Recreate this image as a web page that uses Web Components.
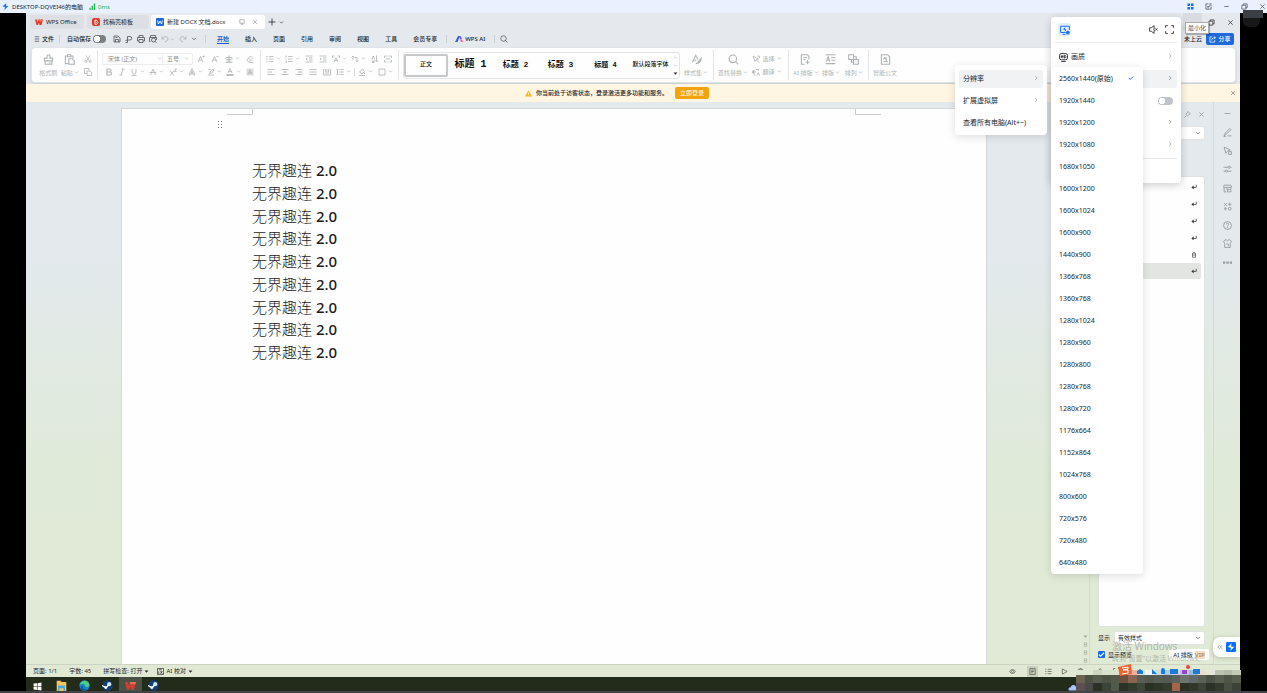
<!DOCTYPE html>
<html lang="zh-CN">
<head>
<meta charset="utf-8">
<title>DESKTOP-DQVEI46的电脑</title>
<style>
html,body{margin:0;height:100%}
body{font-family:"Noto Sans","Noto Sans CJK SC",sans-serif;font-size:6px;line-height:8px;color:#22262b;background:#000;overflow:hidden}
</style>
</head>
<body>
<remote-app></remote-app>
<script>
const BASE = `
*{box-sizing:border-box}
button,input,select{font:inherit;color:inherit;margin:0;padding:0;border:0;background:none;outline:0}
button{display:inline-flex;align-items:center;white-space:nowrap}
ui-icon{flex:none}
.sp{flex:1}`;
function define(name, css, html) {
  const t = document.createElement('template');
  t.innerHTML = `<style>${BASE}${css}</style>${html}`;
  customElements.define(name, class extends HTMLElement {
    constructor() { super(); this.attachShadow({mode: 'open'}).append(t.content.cloneNode(true)); }
  });
}

/* 16-unit stroke icons */
const I = {
  caret: '<path d="M3 5l5 5 5-5" stroke-width="2"/>',
  drop: '<path d="M2 5h12l-6 7z" fill="currentColor" stroke="none"/>',
  right: '<path d="M6 3l5 5-5 5"/>',
  close: '<path d="M3 3l10 10M13 3L3 13"/>',
  min: '<path d="M3 8h10"/>',
  restore: '<path d="M2 5h9v9H2zM5 5V2h9v9h-3"/>',
  plus: '<path d="M8 1v14M1 8h14"/>',
  burger: '<path d="M2 2h12M2 8h12M2 14h12"/>',
  monitor: '<path d="M2 2h12v9H2zM5 14h6M8 11v3"/>',
  save: '<path d="M2 14V2h8l4 4v8zM5 14V9h6v5M5 5h4"/>',
  export: '<path d="M5 15V3h5a3.500 3.500 0 0 1 0 7H5M1 15h4M1 11l4-1"/>',
  print: '<path d="M4 5V1h8v4M4 12H1V5h14v7h-3M4 9h8v6H4z"/>',
  preview: '<path d="M3 5V1h10v4M3 13H1V5h14v5"/><circle cx="9" cy="10" r="4"/><path d="M12 13l3 2"/>',
  undo: '<path d="M2 3v5h5M2 8c3-6 12-6 12 0 0 3-3 5-6 6"/>',
  redo: '<path d="M14 3v5H9M14 8C11 2 2 2 2 8c0 3 3 5 6 6"/>',
  search: '<circle cx="7" cy="7" r="5.500"/><path d="M11 11l4 4"/>',
  brush: '<path d="M6 6V3a2 2 0 0 1 4 0v3h4v4H2V6zM3 10v5h10v-5M10 15v-3"/>',
  paste: '<path d="M5 3H2v11h4M5 1h5v3H5zM10 3h3v3M7 7h5l3 3v5H7z"/>',
  cut: '<path d="M4 1l6 9M12 1L6 10"/><circle cx="4" cy="12.500" r="2.200"/><circle cx="12" cy="12.500" r="2.200"/>',
  copy: '<path d="M5 11H1V1h9v4M6 6h6l3 3v6H6z"/>',
  bold: '<path d="M4 2h5a3 3 0 0 1 0 6H4zM4 8h6a3 3 0 0 1 0 6H4z" stroke-width="2.200"/>',
  italic: '<path d="M7 2h6M3 14h6M10 2L6 14"/>',
  underline: '<path d="M4 2v6a4 4 0 0 0 8 0V2M3 15h10"/>',
  strike: '<path d="M3 14L8 2l5 12M1 9h14"/>',
  sup: '<path d="M2 5l8 10M10 5L2 15M11 2h4l-4 5h4"/>',
  textA: '<path d="M2 14L8 1l6 13h-3L8 6l-3 8zM6 11h4"/>',
  hilite: '<path d="M2 14h12M5 11l2-5 6-4 1 2-4 6-5 1M3 3h4"/>',
  colorA: '<path d="M4 10l4-9 4 9M5 7h6"/><path d="M1 14h14" stroke-width="3.500"/>',
  boxA: '<path d="M1 1h14v14H1z" fill="#dcdedf" stroke="none"/><path d="M4 13l4-10 4 10M5 10h6"/>',
  growA: '<path d="M2 14L7 3l5 11M4 10h6M11 3h4M13 1v4"/>',
  shrinkA: '<path d="M2 14L7 3l5 11M4 10h6M11 3h4"/>',
  phon: '<path d="M8 1v4M2 9V5h12v4M4 9h8M8 5v10M3 12h10M1 15h14"/>',
  eraser: '<path d="M2 9l7-7 5 5-7 7H5zM5 6l5 5M7 15h8"/>',
  bullets: '<path d="M6 3h9M6 8h9M6 13h9"/><path d="M1 3h2M1 8h2M1 13h2" stroke-width="2.500"/>',
  numbers: '<path d="M6 3h9M6 8h9M6 13h9M2 1v4M1 8h2M1 12h2v3H1"/>',
  outdent: '<path d="M1 2h14M8 6h7M8 10h7M1 14h14M5 6L2 8l3 2"/>',
  indent: '<path d="M1 2h14M8 6h7M8 10h7M1 14h14M2 6l3 2-3 2"/>',
  widthA: '<path d="M4 14L8 5l4 9M5 11h6M1 2h4M1 2v4M11 2h4v4"/>',
  dir: '<path d="M4 2v8M1 5l3-3 3 3M12 6v8M9 11l3 3 3-3M8 5h5"/>',
  sort: '<path d="M2 9l2.500-7L7 9M2 12h5l-5 3h5M11 1v12M9 11l2 3 3-3"/>',
  ruler: '<path d="M1 6V2h4M15 6V2h-4M1 10v4h4M15 10v4h-4M3 8h10M7 2h2M7 14h2"/>',
  left: '<path d="M1 3h14M1 8h9M1 13h14"/>',
  center: '<path d="M1 3h14M4 8h8M1 13h14"/>',
  rightal: '<path d="M1 3h14M6 8h9M1 13h14"/>',
  justify: '<path d="M1 3h14M1 8h14M1 13h14"/>',
  dist: '<path d="M1 2v12h14V2M5 2v6M11 2v6M4 10h8M8 2v6"/>',
  spacing: '<path d="M7 3h8M7 8h8M7 13h8M3 2v12M1 4l2-2 2 2M1 12l2 2 2-2"/>',
  fill: '<path d="M3 8l6-6 4 5-5 5zM2 15h12M13 9v3"/>',
  border: '<path d="M2 2h12v12H2zM5 14v1M8 14v1"/>',
  styles: '<path d="M2 12L7 2l3 6M4 9h4M7 14c4 0 3-3 8-8-1 6-3 8-8 8z"/>',
  pick: '<path d="M2 2l4 11 2-4 5-1zM9 10l5 5M11 2h4v4"/>',
  trans: '<path d="M1 6h5v4H1zM3 4v8M8 3h5v3M3 14h4M10 15l2.500-6 2.500 6"/>',
  aidoc: '<path d="M7 15H2V1h9l2 3v4M5 5h5M5 8h3M11 9v6M8 12h6"/>',
  layout: '<path d="M1 1h14M1 14h14M2 11l2.500-7L7 11M3 9h3M9 5h6M9 9h6"/>',
  arrange: '<path d="M1 1h7v7H1zM8 4h4v4M5 8v4h3M8 8h7v7H8z"/>',
  gov: '<path d="M2 1h9l3 3v11H2zM5 11h6M5 8l2-3 2 3M9 5v6"/>',
  pin: '<path d="M9 1l6 6-3 1-4 4-4-5 4-3zM5 11l-4 4"/>',
  pen: '<path d="M2 14l2-5 8-8 2 2-8 8zM8 14h7M1 15h4"/>',
  cursor: '<path d="M2 2l3 11 3-4 5-2zM10 10h5v5h-5z"/>',
  sliders: '<path d="M1 4h8M13 4h2M1 11h3M8 11h7"/><circle cx="11" cy="4" r="2"/><circle cx="6" cy="11" r="2"/>',
  store: '<path d="M2 2h12l1 4H1zM2 6v8h4M14 6v3M5 9h5M8 14h6v-4H8z"/>',
  grid4: '<path d="M2 2l5 5M7 2L2 7M9 4h6M12 1v6M2 12h5M4 9v6"/><circle cx="12" cy="12" r="2.500"/>',
  help: '<circle cx="8" cy="8" r="7"/><path d="M6 6c0-3 4-3 4 0 0 2-2 1-2 4M8 11v2"/>',
  shirt: '<path d="M5 1l3 2 3-2 4 3-2 4v7H3V8L1 4z"/><path d="M6 9h4v4"/>',
  dots: '<path d="M0 6h4v4H0zM6 6h4v4H6zM12 6h4v4h-4z" fill="currentColor" stroke="none"/>',
  eye: '<path d="M1 8c4-6 10-6 14 0-4 6-10 6-14 0z"/><circle cx="8" cy="8" r="2.500"/>',
  page: '<path d="M2 1h12v14H2zM5 5h6M5 8h6M5 11h3"/>',
  play: '<path d="M3 2l11 6-11 6z"/>',
  globe: '<circle cx="8" cy="8" r="6.500"/><path d="M1.500 8h13M8 1.500c-4 4-4 9 0 13 4-4 4-9 0-13"/>',
  full: '<path d="M1 5V1h4M11 1h4v4M15 11v4h-4M5 15H1v-4"/>',
  mute: '<path d="M1 5h3l5-4v14l-5-4H1zM11 6l4 4M15 6l-4 4"/>',
  hd: '<rect x="1" y="1" width="14" height="11" rx="3"/><path d="M4 15h8M4 4v5M7 4v5M4 6.500h3M9.500 4v5c4 0 4-5 0-5"/>',
  check: '<path d="M2 8l4 4 8-8" stroke-width="2.500"/>',
  enter: '<path d="M14 2v7H3" stroke-width="2"/><path d="M7 4L1 9l6 5z" fill="currentColor" stroke="none"/>',
  note: '<path d="M8 2H2v12h12V8M5 8h6M5 11h4M10 2h5M10 5h5"/>',
  share: '<path d="M7 2H2v12h11V9M6 10c0-5 3-6 8-6M11 1l4 3-4 3"/>',
  para: '<path d="M4 3h8v11H4zM4 8h8M6 1h4"/>',
  dbl: '<path d="M7 3L2 8l5 5M14 3L9 8l5 5"/>',
  /* filled and multi-colour marks */
  win4: '<path d="M1 1h6v6H1zM9 1h6v6H9zM1 9h6v6H1zM9 9h6v6H9z" fill="#1a6cf5" stroke="none"/>',
  bolt: '<path d="M10 0L1 8l6 1-2 7 10-9-6-1z" fill="#1978f2" stroke="none"/>',
  signal: '<path d="M1 11h3v5H1zM6 6h3v10H6zM11 1h3v15h-3z" fill="#18b84a" stroke="none"/>',
  wps: '<path d="M0 3h4l1 6 2-6h3l1 6 1-6h4l-3 11H9l-1-5-2 5H3z" fill="#e0392c" stroke="none"/><path d="M7 3h9l-1 3H8z" fill="#f16c51" stroke="none"/>',
  docer: '<rect width="16" height="16" rx="4" fill="#e4382f" stroke="none"/><path d="M6 13V4c6 0 6 4 3 5M6 13c5 0 6-3 6-5" stroke="#fff" stroke-width="2"/>',
  word: '<rect width="16" height="16" rx="2" fill="#1c67e3" stroke="none"/><path d="M3 5l2 7 3-6 3 6 2-7" stroke="#fff" stroke-width="1.800"/>',
  wpsai: '<path d="M0 14L6 2h4L5 14z" fill="#2f62f4" stroke="none"/><path d="M8 2h3l3 6h-4z" fill="#7a4df2" stroke="none"/><path d="M10 9h4l2 5h-4z" fill="#ee55c4" stroke="none"/>',
  warn: '<path d="M8 1l8 14H0z" fill="#f9b418" stroke="none"/><path d="M8 6v4M8 12v1" stroke="#fff" stroke-width="1.800"/>',
  cast: '<path d="M9 12H1V2h14v6M4 15h5M8 4L6 7h3l-1 3" stroke="#1a73f0"/><circle cx="12.500" cy="12" r="3" fill="#1a73f0" stroke="none"/>',
  start: '<path d="M1 2.500L7 2v5.500H1zM8 2l7-1v6.500H8zM1 8.500h6V14l-6-.5zM8 8.500h7V15l-7-1z" fill="#fff" stroke="none"/>',
  folder: '<path d="M1 1h6l1 2h7v13H1z" fill="#f4c64f" stroke="none"/><path d="M3 8h10v8h-2v-4H5v4H3z" fill="#4aa9dc" stroke="none"/>',
  edge: '<circle cx="8" cy="8" r="7.500" fill="#1687cf" stroke="none"/><path d="M1 7C3-1 14-1 15 7c0 4-5 4-6 2 1-3-5-4-8-2z" fill="#48cf80" stroke="none"/><path d="M6 8c-2 4 1 7 6 5-3 4-9 2-9-2 0-2 2-3 3-3z" fill="#0c4d96" stroke="none"/>',
  steam: '<circle cx="8" cy="8" r="7.500" fill="#123f78" stroke="none"/><circle cx="10.500" cy="6" r="3" fill="#cfe3f2" stroke="none"/><path d="M0 8l6 3 4-4" stroke="#fff" stroke-width="2"/><circle cx="5.500" cy="11" r="2" fill="#fff" stroke="none"/>',
  cloud: '<path d="M2 15c-3-4 1-7 3-6C6 3 14 2 16 8v7z" fill="#a5c6fb" stroke="none"/>',
  bluebolt: '<rect width="16" height="16" rx="2" fill="#0f6ef7" stroke="none"/><path d="M9 2L3 8l5 1-1 5 6-6-5-1z" fill="#fff" stroke="none"/>',
  aibox: '<path d="M1 1h14v14H1zM4 4h7M8 7l4 6M12 7l-4 6M4 8v5"/>'
};
customElements.define('ui-icon', class extends HTMLElement {
  constructor() { super(); this.attachShadow({mode: 'open'}); }
  connectedCallback() {
    this.shadowRoot.innerHTML = `<style>:host{display:inline-block;width:var(--s,8px);height:var(--s,8px)}svg{display:block;width:100%;height:100%}</style>
    <svg viewBox="0 0 16 16" fill="none" stroke="currentColor" stroke-width="1.600" aria-hidden="true">${I[this.getAttribute('name')] || ''}</svg>`;
  }
});

/* ribbon button: icon, optional caret, optional caption (stacked or inline) */
customElements.define('tool-btn', class extends HTMLElement {
  constructor() { super(); this.attachShadow({mode: 'open'}); }
  connectedCallback() {
    const c = this.hasAttribute('caret') ? '<ui-icon class="c" name="caret"></ui-icon>' : '';
    const icon = `<ui-icon name="${this.getAttribute('icon')}"></ui-icon>`;
    const label = this.getAttribute('label') || '';
    const big = this.hasAttribute('big');
    this.shadowRoot.innerHTML = `<style>${BASE}
    :host{display:flex;--s:8px}
    button{gap:2px;width:100%;justify-content:center}
    .c{--s:5px}
    .big{flex-direction:column;gap:4px;--s:11px}
    .big span{display:flex;align-items:center;gap:1px;line-height:8px}</style>
    <button class="${big ? 'big' : ''}" aria-label="${label || this.getAttribute('icon')}">${big ? `${icon}<span>${label}${c}</span>` : `${icon}${label}${c}`}</button>`;
  }
});

define('remote-titlebar', `
:host{display:flex;align-items:center;height:13px;padding:0 0 0 2px;background:#e9f1fe;--s:7px}
.n{margin:0 6px 0 3px}.ms{color:#1cb44c;margin-left:2px}
button{width:18px;justify-content:center;color:#444b55}
nav{display:flex;margin-right:-4px}`, `
<ui-icon name="bolt"></ui-icon><span class="n">DESKTOP-DQVEI46的电脑</span><ui-icon name="signal"></ui-icon><span class="ms">0ms</span><span class="sp"></span>
<nav><button aria-label="应用"><ui-icon name="win4"></ui-icon></button><button aria-label="便签"><ui-icon name="note"></ui-icon></button><button aria-label="最小化"><ui-icon name="min"></ui-icon></button><button aria-label="还原"><ui-icon name="restore"></ui-icon></button><button aria-label="关闭"><ui-icon name="close"></ui-icon></button></nav>`);

define('wps-tabs', `
:host{display:flex;align-items:center;height:18px;padding:0 0 0 4px;--s:8px}
.t{display:flex;align-items:center;gap:3px;height:14px;padding:0 5px;border-radius:3px;background:#dcdfe3;width:54px;margin-right:3px}
.t.b{width:62px;margin-right:2px}
.t.on{background:#fff;width:114px}
.t.on span{flex:1}
.t.on .g{color:#8a8f95;--s:6px}.t.on button+button{margin:0 2px 0 4px}
.add{--s:8px;margin:0 3px 0 0}.dn{--s:5px}
.w{width:19px;height:18px;justify-content:center;--s:7px}.w.h{background:#d9dce0}`, `
<button class="t"><ui-icon name="wps"></ui-icon>WPS Office</button>
<button class="t b"><ui-icon name="docer"></ui-icon>找稿壳模板</button>
<div class="t on"><ui-icon name="word"></ui-icon><span>新建 DOCX 文档.docx</span><button class="g" aria-label="窗口"><ui-icon name="monitor"></ui-icon></button><button class="g" aria-label="关闭标签"><ui-icon name="close"></ui-icon></button></div>
<button class="add" aria-label="新建"><ui-icon name="plus"></ui-icon></button><button class="dn" aria-label="标签列表"><ui-icon name="caret"></ui-icon></button>
<span class="sp"></span>
<button class="w h" aria-label="最小化"><ui-icon name="min"></ui-icon></button><button class="w" aria-label="还原"><ui-icon name="restore"></ui-icon></button><button class="w" aria-label="关闭"><ui-icon name="close"></ui-icon></button>`);

define('wps-menubar', `
:host{display:flex;align-items:center;height:16px;padding:0 6px 0 8px;--s:8px;font-weight:500}
.f{gap:2px;--s:6px}
i{width:1px;height:8px;background:#ccd1d6}
.f+i{margin-left:5px}
label{display:flex;align-items:center;gap:2px;margin-left:7px}
input{appearance:none;width:13px;height:8px;border-radius:4px;background:radial-gradient(circle at 4px 4px,#fff 3px,transparent 3px) #7d8083}
.q{display:flex;gap:4px;margin:0 8px 0 7px;color:#4b5055}
.q .g{color:#a9aeb3;gap:1px}.c{--s:5px}.m{--s:6px}
nav{display:flex;gap:16px;margin:0 9px 0 11px}
nav a{color:inherit;text-decoration:none}
nav a.on{color:#1c5fc4;font-weight:700;box-shadow:0 1px 0 #1c5fc4}
.ai{gap:2px;margin:0 9px 0 8px}
.se{margin-left:5px;color:#5a6068}
.sh{height:12px;width:28px;justify-content:center;gap:2px;background:#1f69dd;color:#fff;border-radius:2px;--s:7px;margin-left:4px}`, `
<button class="f"><ui-icon name="burger"></ui-icon>文件</button><i></i>
<label>自动保存<input type="checkbox"></label>
<div class="q"><button aria-label="保存"><ui-icon name="save"></ui-icon></button><button aria-label="输出"><ui-icon name="export"></ui-icon></button><button aria-label="打印"><ui-icon name="print"></ui-icon></button><button aria-label="预览"><ui-icon name="preview"></ui-icon></button><button class="g" aria-label="撤销"><ui-icon name="undo"></ui-icon><ui-icon class="c" name="caret"></ui-icon></button><button class="g" aria-label="恢复"><ui-icon name="redo"></ui-icon></button><button class="m" aria-label="更多"><ui-icon name="caret"></ui-icon></button></div><i></i>
<nav><a href="#" class="on">开始</a><a href="#">插入</a><a href="#">页面</a><a href="#">引用</a><a href="#">审阅</a><a href="#">视图</a><a href="#">工具</a><a href="#">会员专享</a></nav><i></i>
<button class="ai"><ui-icon name="wpsai"></ui-icon>WPS AI</button><i></i><button class="se" aria-label="搜索"><ui-icon name="search"></ui-icon></button>
<span class="sp"></span><span>未上云</span><button class="sh"><ui-icon name="share"></ui-icon>分享</button>`);

define('wps-ribbon', `
:host{display:flex;height:36px;margin:0 4px 0 5px;padding:2px 0;background:#fdfefd;border:1px solid #e1e5e8;border-radius:4px;box-shadow:0 1px 2px #0002;color:#b0b3b5}
section{display:flex;align-items:center;border-right:1px solid #e3e5e6;flex:none}
.col{display:flex;flex-direction:column;gap:5px;flex:1}
.r{display:flex;justify-content:space-between;align-items:center;height:8px}
.n{width:13px}.w{width:19px}
.cl{width:66px;padding:0 3px 0 6px;gap:1px}
.cl .b{width:22px}.cl .col{flex:none;width:13px}
.fo{width:163px;padding:0 4px}
.sel{display:flex;border:1px solid #eceeee;border-radius:2px;height:12px;align-items:center;width:91px;color:#8b8e90}
.sel select{appearance:none;padding-left:5px;height:8px;width:54px;line-height:8px}
.sel select+ui-icon+select{width:22px;border-left:1px solid #eceeee;padding-left:4px}
.sel ui-icon{--s:5px;color:#b8babc}
.pa{width:138px;padding:0 3px}
.pa i{width:1px;height:8px;background:#dcdedf}
.st{width:315px;padding-left:4px}
.gal{display:flex;align-items:center;width:277px;height:27px;border:1px solid #e3e5e6;border-radius:3px;color:#111}
.gal button{width:45px;height:23px;justify-content:center;font-family:"Liberation Mono","Noto Sans CJK SC",monospace;font-weight:700}
.gal .z{border:2px solid #c6c8c9;border-radius:2px;font-weight:500;width:44px}
.h1{font-size:10px}.h2{font-size:8px}.h4{font-size:7px}.gal .d{font-weight:500}
.ar{display:flex;flex-direction:column;gap:3px;--s:5px;color:#b8babc}.ar ui-icon:last-child{color:#222}.ar ui-icon:first-child{transform:rotate(180deg)}
.st tool-btn{width:32px}
.fi{width:75px;padding-left:4px}.fi>tool-btn{width:30px;margin-right:4px}.fi .col{flex:none;width:30px;gap:5px}
.ly{width:80px;padding:0 3px}.ly .a{width:28px}.ly .b{width:23px}
.go{border:0;padding-left:3px}.go tool-btn{width:26px}`, `
<section class="cl"><tool-btn class="b" big icon="brush" label="格式刷"></tool-btn><tool-btn class="b" big caret icon="paste" label="粘贴"></tool-btn><div class="col"><tool-btn icon="cut"></tool-btn><tool-btn icon="copy"></tool-btn></div></section>
<section class="fo"><div class="col"><div class="r"><div class="sel"><select aria-label="字体"><option>宋体 (正文)</option></select><ui-icon name="caret"></ui-icon><select aria-label="字号"><option>五号</option></select><ui-icon name="caret"></ui-icon></div><tool-btn class="n" icon="growA"></tool-btn><tool-btn class="n" icon="shrinkA"></tool-btn><tool-btn class="w" caret icon="phon"></tool-btn><tool-btn class="n" icon="eraser"></tool-btn></div>
<div class="r"><tool-btn class="n" icon="bold"></tool-btn><tool-btn class="n" icon="italic"></tool-btn><tool-btn class="w" caret icon="underline"></tool-btn><tool-btn class="w" caret icon="strike"></tool-btn><tool-btn class="w" caret icon="sup"></tool-btn><tool-btn class="w" caret icon="textA"></tool-btn><tool-btn class="w" caret icon="hilite"></tool-btn><tool-btn class="w" caret icon="colorA"></tool-btn><tool-btn class="n" icon="boxA"></tool-btn></div></div></section>
<section class="pa"><div class="col"><div class="r"><tool-btn class="w" caret icon="bullets"></tool-btn><tool-btn class="w" caret icon="numbers"></tool-btn><tool-btn class="n" icon="outdent"></tool-btn><tool-btn class="n" icon="indent"></tool-btn><tool-btn class="w" caret icon="widthA"></tool-btn><tool-btn class="w" caret icon="dir"></tool-btn><tool-btn class="n" icon="sort"></tool-btn><tool-btn class="n" icon="ruler"></tool-btn></div>
<div class="r"><tool-btn class="n" icon="left"></tool-btn><tool-btn class="n" icon="center"></tool-btn><tool-btn class="n" icon="rightal"></tool-btn><tool-btn class="n" icon="justify"></tool-btn><tool-btn class="n" icon="dist"></tool-btn><tool-btn class="w" caret icon="spacing"></tool-btn><i></i><tool-btn class="w" caret icon="fill"></tool-btn><tool-btn class="w" caret icon="border"></tool-btn></div></div></section>
<section class="st"><div class="gal"><button class="z">正文</button><button class="h1">标题 1</button><button class="h2">标题 2</button><button class="h2">标题 3</button><button class="h4">标题 4</button><button class="d">默认段落字体</button><span class="ar"><ui-icon name="caret"></ui-icon><ui-icon name="caret"></ui-icon><ui-icon name="drop"></ui-icon></span></div><tool-btn big caret icon="styles" label="样式集"></tool-btn></section>
<section class="fi"><tool-btn big caret icon="search" label="查找替换"></tool-btn><div class="col"><tool-btn caret icon="pick" label="选择"></tool-btn><tool-btn caret icon="trans" label="翻译"></tool-btn></div></section>
<section class="ly"><tool-btn class="a" big caret icon="aidoc" label="AI 排版"></tool-btn><tool-btn class="b" big caret icon="layout" label="排版"></tool-btn><tool-btn class="b" big caret icon="arrange" label="排列"></tool-btn></section>
<section class="go"><tool-btn big icon="gov" label="智能公文"></tool-btn></section>`);

define('guest-notice', `
:host{display:flex;align-items:center;height:18px;margin-top:1px;padding-right:4px;background:#fef5e3;--s:7px}
:host>span{margin:0 7px 0 4px}
span{font-weight:500}
.go{height:12px;width:34px;justify-content:center;border-radius:2px;background:#f3a40c;color:#fff}
.x{--s:6px;color:#6b6b6b}
.l{flex:1}.r{flex:1 1 28px;display:flex;justify-content:flex-end}`, `
<div class="l"></div><ui-icon name="warn"></ui-icon><span>你当前处于访客状态，登录激活更多功能和服务。</span><button class="go">立即登录</button><div class="r"><button class="x" aria-label="关闭提示"><ui-icon name="close"></ui-icon></button></div>`);

define('doc-page', `
:host{display:block;flex:1;margin:6px 0 0 95px;background:#fefefe;border:solid #d3d8db;border-width:1px 1px 0}
.m{display:flex;justify-content:space-between;padding:0 105px}
.m b{width:26px;height:6px;border:solid #c9cccd;border-width:0 1px 1px 0}
.m b+b{border-width:0 0 1px 1px}
.g{display:block;margin:5px 0 0 95px;width:6px;height:8px;background:radial-gradient(circle,#777 1px,transparent 1px) 0 0/3px 3px}
article{display:grid;grid-auto-rows:1fr;height:205px;margin:31px 131px 0 130px;font-size:15px;line-height:22px;color:#1c1c1c}
p{margin:0}p span{font-family:"Noto Sans CJK SC",sans-serif;font-weight:300}p b{font-weight:500}`, `
<div class="m"><b></b><b></b></div><span class="g"></span><article>${'<p><span>无界趣连</span> <b>2.0</b></p>'.repeat(9)}</article>`);

define('style-panel', `
:host{display:flex;flex-direction:column;width:125px;padding:6px 8px 3px;border:solid #d5dbdb;border-width:0 1px}
.h{display:flex;justify-content:flex-end;gap:7px;height:12px;align-items:center;--s:7px;color:#8d949a;margin-bottom:6px}
.s{appearance:none;background:#fff;border:1px solid #dfe3e3;border-radius:2px;height:14px;flex:1;padding-left:3px;line-height:8px}
.c{display:flex;align-items:center;position:relative}
.c>ui-icon{position:absolute;right:4px;--s:6px;color:#555}
ul{list-style:none;margin:36px 0 4px;padding:1px 3px 0;flex:1;background:#fdfefd;border:1px solid #dde2de;border-radius:3px;--s:6px}
li{display:flex;align-items:center;justify-content:flex-end;height:17px;padding-right:4px;color:#333}
li:last-child{background:#e3e5e3;border-radius:2px;height:16px}
.d{display:flex;gap:4px;align-items:center}.d .c{flex:1}
.f{display:flex;align-items:center;gap:3px;height:13px;margin:3px -4px 0 0}
.f input{width:7px;height:7px;appearance:none;border-radius:1px;background:#1769e8}
.k{display:flex;align-items:center;gap:3px}
.k .b{display:grid;--s:7px;color:#fff}.k .b>*{grid-area:1/1}
.ai{margin-left:auto;background:#fff;border-radius:2px;height:11px;width:40px;justify-content:center;gap:2px}
.ai b{background:#f3dfc4;color:#c59054;border-radius:1px}`, `
<div class="h"><button aria-label="固定"><ui-icon name="pin"></ui-icon></button><button aria-label="关闭面板"><ui-icon name="close"></ui-icon></button></div>
<div class="c"><select class="s" aria-label="样式"><option></option></select><ui-icon name="caret"></ui-icon></div>
<ul><li><ui-icon name="enter"></ui-icon></li><li><ui-icon name="enter"></ui-icon></li><li><ui-icon name="enter"></ui-icon></li><li><ui-icon name="enter"></ui-icon></li><li><ui-icon name="para"></ui-icon></li><li><ui-icon name="enter"></ui-icon></li></ul>
<div class="d"><label for="v">显示</label><div class="c"><select class="s" id="v"><option>有效样式</option></select><ui-icon name="caret"></ui-icon></div></div>
<div class="f"><label class="k"><span class="b"><input type="checkbox" checked><ui-icon name="check"></ui-icon></span>显示预览</label><button class="ai">AI 排版<b>VIP</b></button></div>`);

define('tool-rail', `
:host{display:block;width:26px;--s:9px;color:#979da1}
div{display:flex;flex-direction:column;justify-content:space-between;align-items:center;height:158px;margin-top:7px}`,
`<div>${['min','pen','cursor','sliders','store','grid4','help','shirt','dots'].map(n => `<button aria-label="${n}"><ui-icon name="${n}"></ui-icon></button>`).join('')}</div>`);

define('scroll-strip', `
:host{display:flex;flex-direction:column;justify-content:flex-end;align-items:center;gap:3px;width:8px;margin-left:94px;padding-bottom:1px;--s:5px;color:#9aa295}
ui-icon:first-child{color:#555}`, `<ui-icon name="drop"></ui-icon><ui-icon name="para"></ui-icon><ui-icon name="para"></ui-icon><ui-icon name="para"></ui-icon>`);

define('status-bar', `
:host{display:flex;align-items:center;height:13px;border-top:1px solid #cbd3c3;padding:0 7px;background:#e1e9d5;--s:7px}
.a{margin-right:12px}.s{gap:2px;margin-right:8px}.c{--s:5px}
.v{display:flex;gap:1px;margin-right:93px;color:#52584c}
.v button{width:15px;height:11px;justify-content:center}
.v .on{background:#c9d1be;width:11px;margin:0 2px 0 6px}
.v .off{margin:0 2px}`, `
<span class="a">页面: 1/1</span><span class="a">字数: 45</span><button class="s">拼写检查: 打开<ui-icon class="c" name="drop"></ui-icon></button><button class="s"><ui-icon name="aibox"></ui-icon>AI 校对<ui-icon class="c" name="drop"></ui-icon></button><span class="sp"></span>
<div class="v"><button aria-label="护眼"><ui-icon name="eye"></ui-icon></button><button class="on" aria-label="页面视图"><ui-icon name="page"></ui-icon></button><button aria-label="大纲"><ui-icon name="bullets"></ui-icon></button><button aria-label="阅读"><ui-icon name="play"></ui-icon></button><button aria-label="网页"><ui-icon name="globe"></ui-icon></button><button class="off" aria-label="笔"><ui-icon name="pen"></ui-icon></button><button aria-label="适应"><ui-icon name="full"></ui-icon></button><button aria-label="缩放"><ui-icon name="dots"></ui-icon></button></div>`);

define('task-bar', `
:host{display:flex;height:14px;background:#232b1b;overflow:hidden;--s:11px}
button{width:23px;justify-content:center;align-items:flex-start;padding-top:3px}
.on{background:#4b5245}
.s{--s:9px;padding-top:5px}.s+button{margin-left:1px}`, `
<button class="s" aria-label="开始"><ui-icon name="start"></ui-icon></button><button aria-label="文件资源管理器"><ui-icon name="folder"></ui-icon></button><button aria-label="Edge"><ui-icon name="edge"></ui-icon></button><button aria-label="Steam"><ui-icon name="steam"></ui-icon></button><button class="on" aria-label="WPS"><ui-icon name="wps"></ui-icon></button><button aria-label="Steam"><ui-icon name="steam"></ui-icon></button>`);

/* menu row: text plus a trailing chevron, tick or switch */
define('menu-row', `
:host{display:flex;align-items:center;height:18px;margin:4px;padding:0 4px;border-radius:2px;font-size:7px;line-height:10px;--s:6px}
:host([on]){background:#f1f2f4}
button{width:100%;gap:3px}slot[name=end]{display:block}
.sp{text-align:left}`, `<button role="menuitem"><slot name="start"></slot><span class="sp"><slot></slot></span><slot name="end"></slot></button>`);

define('remote-menu', `
:host{display:block;width:130px;height:166px;background:#fff;border-radius:4px;box-shadow:0 2px 8px #0003}
header{display:flex;align-items:center;gap:7px;height:26px;margin:0 4px 5px;padding:0 3px;border-bottom:1px solid #e8e9eb;--s:9px;color:#333}
.c{background:#e3eefe;border-radius:2px;width:13px;height:13px;justify-content:center;--s:10px}
.e{color:#777}.h{--s:9px}
menu-row input{appearance:none;width:15px;height:8px;border-radius:4px;background:radial-gradient(circle at 4px 4px,#fff 3px,transparent 3px) #bfc3c9;display:block}
hr{border:0;border-top:1px solid #e8e9eb;margin:0 4px}`, `
<header><button class="c" aria-label="投屏"><ui-icon name="cast"></ui-icon></button><span class="sp"></span><button aria-label="静音"><ui-icon name="mute"></ui-icon></button><button aria-label="全屏"><ui-icon name="full"></ui-icon></button></header>
<menu-row><ui-icon class="h" slot="start" name="hd"></ui-icon>画质<ui-icon class="e" slot="end" name="right"></ui-icon></menu-row>
<menu-row on><ui-icon class="e" slot="end" name="right"></ui-icon></menu-row>
<menu-row><input slot="end" type="checkbox" aria-label="开关"></menu-row>
<menu-row><ui-icon class="e" slot="end" name="right"></ui-icon></menu-row>
<menu-row><ui-icon class="e" slot="end" name="right"></ui-icon></menu-row><hr>`);

const RES = ['1920x1440','1920x1200','1920x1080','1680x1050','1600x1200','1600x1024','1600x900','1440x900','1366x768','1360x768','1280x1024','1280x960','1280x800','1280x768','1280x720','1176x664','1152x864','1024x768','800x600','720x576','720x480','640x480'];
define('resolution-menu', `
:host{display:flow-root;width:92px;background:#fff;border-radius:4px;box-shadow:0 2px 8px #0002}
menu-row:first-of-type{margin-top:3px}menu-row:last-of-type{margin-bottom:2px}
.k{color:#0f6cf5;margin-right:1px}`,
`<menu-row>2560x1440(原始)<ui-icon class="k" slot="end" name="check"></ui-icon></menu-row>${RES.map(r => `<menu-row>${r}</menu-row>`).join('')}`);

define('screen-menu', `
:host{display:flow-root;width:92px;background:#fff;border-radius:4px;box-shadow:0 2px 8px #0002}
menu-row:first-of-type{margin-top:5px}menu-row:last-of-type{margin-bottom:3px}
.e{color:#888}`, `
<menu-row on>分辨率<ui-icon class="e" slot="end" name="right"></ui-icon></menu-row><menu-row>扩展虚拟屏<ui-icon class="e" slot="end" name="right"></ui-icon></menu-row><menu-row>查看所有电脑(Alt+~)</menu-row>`);

/* blocks that hide the tray */
const A = '#dfe7d3 #dfe7d3 #cdd5c1 #dbe3cf #dbe3cf #e89a80 #f0b09c #cfe2ee #eff4f6 #c5ddec #a9cce3 #d6cae6 #c6c4ea #8fc0e4 #f3dccb #e6e6da #bdc5b2 #b4bca9 #c3cbb8'.split(' ');
const B = '#6b624f #4c5243 #565c4e #4e5546 #535a4b #70503c #8a6552 #5a5f56 #525a50 #565d53 #555b54 #5c625c #6d736d #62696a #5b6157 #4c5346 #586050 #4e5547 #575d4f'.split(' ');
const C = '#5c5052 #4a4a48 #2b3126 #3c4338 #525a4c #2c3228 #333a2e #3f463a #2a3025 #2e3529 #353c30 #a2664a #2a3023 #30372a #3c4337 #2b3126 #343b2e #485043 #3b4237'.split(' ');
define('tray-blocks', `
:host{display:grid;grid-template-columns:repeat(19,1fr);grid-template-rows:5px 8px 8px;width:165px}`,
[...A, ...B, ...C].map(c => `<span style="background:${c}"></span>`).join(''));

define('ime-bar', `:host{display:block;width:92px;height:12px}svg{display:block}`, `
<svg width="92" height="12" viewBox="0 0 92 12"><path d="M0 3l13-3 1 10-12 2z" fill="#ea6532"/><path d="M4 4l6-1v2l-5 1 5 0v3l-6 1" fill="none" stroke="#fff"/><g fill="#1c7bd4"><path d="M19 7l3-2 3 2v3h-6zM34 5l5 5h-5zM43 6a2 2 0 0 1 4 0v4h-4zM52 5h8v5h-8zM75 5h7v5h-7z"/></g><path d="M64 6h5v4h-5z" fill="#8f4cc0"/><circle cx="70" cy="3" r="2" fill="#ef4036"/></svg>`);

define('wps-window', `
:host{display:flex;flex-direction:column;flex:1;min-width:0;background:linear-gradient(#e5e9ee 0,#e3e9ed 35%,#e0ead8 68%,#e1ead5 100%)}
main{display:flex;flex:1;min-height:0}`, `
<wps-tabs></wps-tabs><wps-menubar></wps-menubar><wps-ribbon></wps-ribbon><guest-notice></guest-notice>
<main><doc-page></doc-page><scroll-strip></scroll-strip><style-panel></style-panel><tool-rail></tool-rail></main>
<status-bar></status-bar><task-bar></task-bar>`);

define('remote-app', `
:host{display:flex;flex-direction:column;height:100%;position:relative;overflow:hidden}
.stage{display:flex;flex:1;min-height:0;padding:0 27px 0 26px;background:#000;border-bottom:2px solid #434446}
.o{position:absolute}
remote-menu{top:17px;right:86px}
resolution-menu{top:67px;right:124px}
screen-menu{top:65px;right:220px}
.tip{top:22px;right:58px;width:24px;height:12px;background:#fbfbfb;border:1px solid #aaa;box-shadow:1px 1px 1px #0004;text-align:center;line-height:10px;color:#555}
.wm{right:58px;bottom:29px;width:97px;color:#8f9590a0;font-size:7px;line-height:11px;white-space:nowrap}
.wm b{display:block;font-size:10px;line-height:13px;font-weight:400}
.pill{right:27px;bottom:36px;width:27px;height:20px;display:flex;align-items:center;justify-content:space-between;padding:0 4px;background:#fdfefe;border-radius:7px 0 0 7px;box-shadow:0 1px 5px #0003;--s:10px}
.pill ui-icon:first-child{--s:6px;color:#666}
tray-blocks{right:26px;bottom:2px}
ime-bar{right:57px;bottom:17px}
.cl{right:191px;bottom:2px;--s:8px}
.k1{top:10px;right:4px;width:20px;height:8px;background:#3b3e42}
.k2{top:18px;right:7px;width:17px;height:9px;background:#17181a;border-radius:0 0 6px 6px}`, `
<remote-titlebar></remote-titlebar><div class="stage"><wps-window></wps-window></div>
<span class="o k1"></span><span class="o k2"></span>
<div class="o tip">最小化</div>
<div class="o wm"><b>激活 Windows</b>转到“设置”以激活 Windows。</div>
<button class="o pill" aria-label="展开"><ui-icon name="dbl"></ui-icon><ui-icon name="bluebolt"></ui-icon></button>
<tray-blocks class="o"></tray-blocks><ime-bar class="o"></ime-bar><ui-icon class="o cl" name="cloud"></ui-icon>
<remote-menu class="o"></remote-menu><screen-menu class="o"></screen-menu><resolution-menu class="o"></resolution-menu>`);
</script>
</body>
</html>
